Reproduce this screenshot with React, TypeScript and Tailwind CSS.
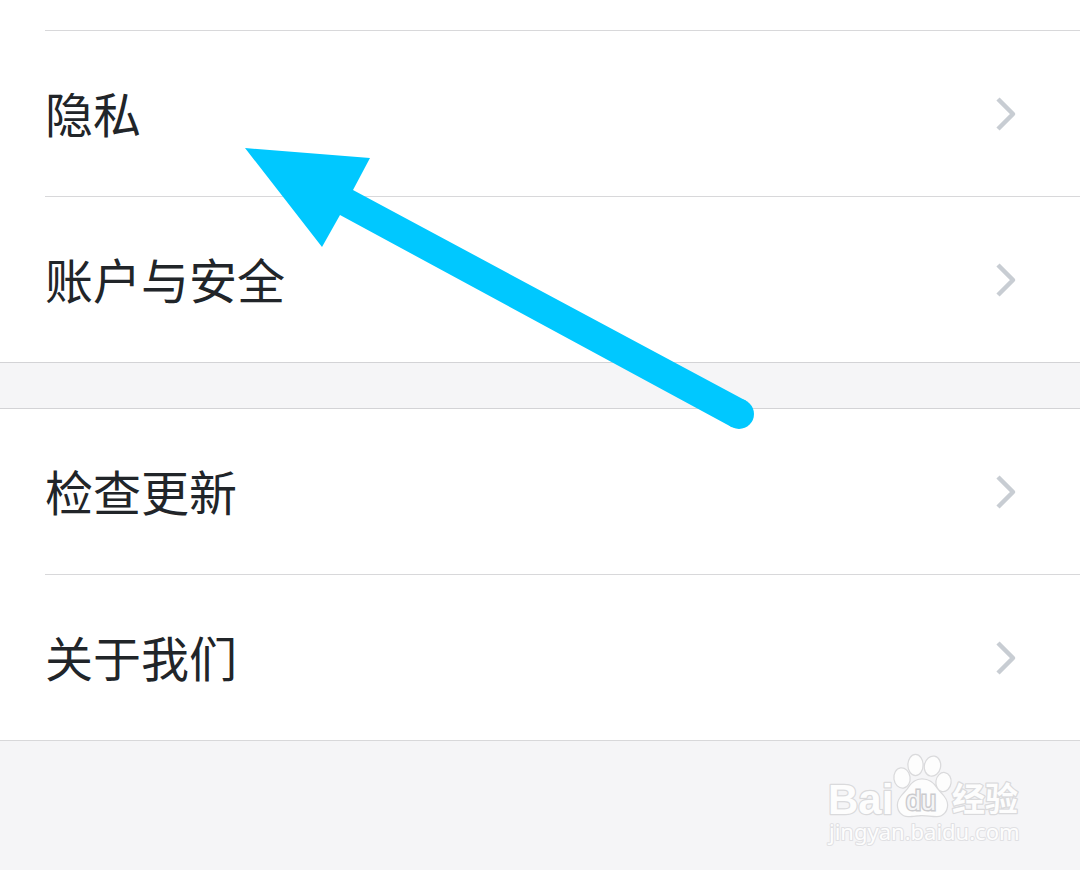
import React from 'react';

// Props interface for a single row of the settings list
interface SettingRowProps {
  label: string;
}

interface SettingGroupProps {
  items: string[];
  dividerOnTop?: boolean;
}

const accountItems = ['隐私', '账户与安全'];
const aboutItems = ['检查更新', '关于我们'];

const Chevron: React.FC = () => (
  <svg className="h-10 w-6 shrink-0" viewBox="0 0 24 40" fill="none" aria-hidden="true">
    <path d="M4 5L19 20L4 35" stroke="#c8cdd3" strokeWidth="4.5" strokeLinecap="butt" strokeLinejoin="round" />
  </svg>
);

const SettingRow: React.FC<SettingRowProps> = ({ label }) => (
  <button type="button" className="flex h-[165px] w-full items-center justify-between pr-[62px] text-left">
    <span className="pb-1 text-5xl leading-[56px] text-[#212529]">{label}</span>
    <Chevron />
  </button>
);

// Group of rows, the dividers start at the left padding and run to the right edge
const SettingGroup: React.FC<SettingGroupProps> = ({ items, dividerOnTop = false }) => (
  <ul className={dividerOnTop ? 'bg-white pl-[45px]' : 'bg-white pl-[45px] [&>li:first-child]:border-t-0'}>
    {items.map((item) => (
      <li key={item} className="border-t border-[#d8d8da]">
        <SettingRow label={item} />
      </li>
    ))}
  </ul>
);

const Arrow: React.FC = () => (
  <svg className="pointer-events-none absolute left-[240px] top-[140px] h-[300px] w-[520px]" viewBox="240 140 520 300" aria-hidden="true">
    <path d="M245 148L370 158L353 190L746 400.800L732 427.200L340 215L322 247Z" fill="#00c8ff" />
    <circle cx="739" cy="414" r="15" fill="#00c8ff" />
  </svg>
);

const Watermark: React.FC = () => (
  <svg className="h-[100px] w-[210px]" viewBox="820 750 210 100" role="img" aria-label="Baidu 经验">
    <g fill="#fdfdfd" stroke="#dadadc" strokeWidth="2.500" paintOrder="stroke" strokeLinejoin="round">
      <text x="828" y="814" fontSize="42" fontWeight="700" fontFamily="'Liberation Sans', sans-serif">Bai</text>
      <ellipse cx="902" cy="778" rx="7.500" ry="9.500" transform="rotate(-8 902 778)" />
      <ellipse cx="915.500" cy="765" rx="7" ry="10" />
      <ellipse cx="932.500" cy="766" rx="7.500" ry="9.500" transform="rotate(12 932 766)" />
      <ellipse cx="943.500" cy="782" rx="7" ry="9" transform="rotate(8 943 782)" />
      <path d="M922 779.500C915 779.500 911 784 908 789C904 794 898 798 898 805C898 811 902 816 908 816C914 816 917 815 922 815C928 815 931 816 937 816C943 816 947 811 947 805C947 798 941 794 937 789C934 784 930 779.500 922 779.500Z" />
      <text x="952" y="811" fontSize="33" fontWeight="700" fontFamily="'Noto Sans CJK SC', sans-serif">经验</text>
    </g>
    <text x="829" y="840" fontSize="22" fill="#fdfdfd" stroke="#e0e0e3" strokeWidth="2" paintOrder="stroke" strokeLinejoin="round" fontFamily="'Noto Sans', sans-serif">jingyan.baidu.com</text>
    <text x="906" y="810" fontSize="27" fill="#f5f5f6" stroke="#cbcbce" strokeWidth="3" paintOrder="stroke" fontFamily="'Liberation Sans', sans-serif">du</text>
  </svg>
);

const App: React.FC = () => {
  return (
    <main className="relative flex min-h-screen flex-col bg-white font-['Noto_Sans_CJK_SC',sans-serif]">
      <div className="h-[30px]" />
      <SettingGroup items={accountItems} dividerOnTop />

      {/* Spacer between the two groups */}
      <div className="h-[47px] border-y border-[#d3d3d6] bg-[#f5f5f7]" />
      <SettingGroup items={aboutItems} />

      <footer className="flex grow items-start justify-end border-t border-[#d8d8da] bg-[#f5f5f7] pt-[9px] pr-[50px]">
        <Watermark />
      </footer>

      <Arrow />
    </main>
  );
};

export default App;
